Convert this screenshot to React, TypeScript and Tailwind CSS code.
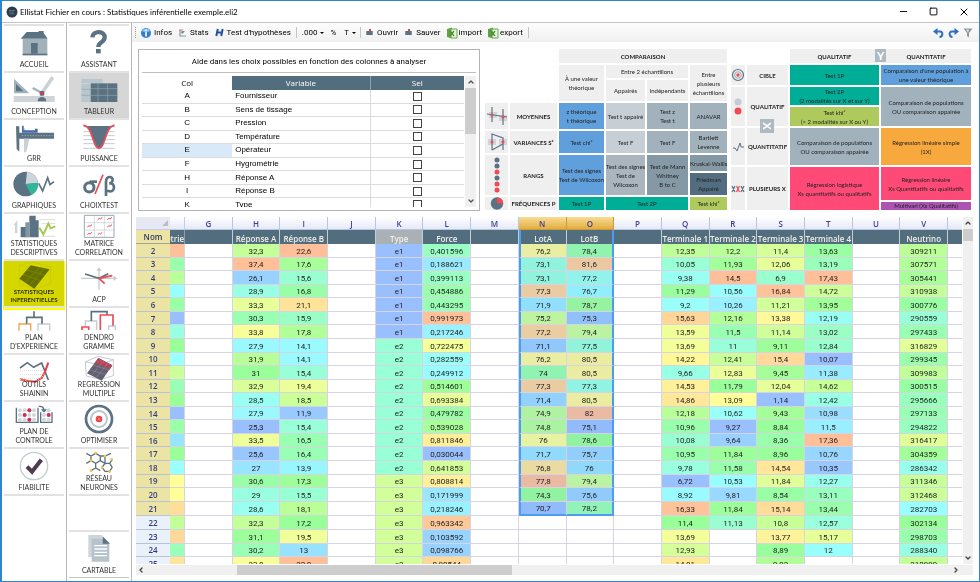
import { useState } from "react";
import type { ReactNode } from "react";
import { ChevronDown, ChevronLeft, ChevronRight, ChevronUp, Minus, Square, X } from "lucide-react";
import clsx from "clsx";

const SLATE = "#5b7282";
const LIGHT = "#c3ccd2";
const RED = "#ee4b55";

interface NavEntry {
    id: string;
    label: string[];
    icon: ReactNode;
}

// Sidebar icons share a 132 wide canvas, drawn at one third of its size
const Icon = ({ children, short }: { children: ReactNode; short?: boolean }) => (
    <svg
        viewBox={short ? "0 0 132 66" : "0 0 132 78"}
        className={clsx("w-11 shrink-0 overflow-visible", short ? "h-[22px]" : "h-[26px]")}
        fill="none"
        aria-hidden="true"
    >
        {children}
    </svg>
);

const leftNav: NavEntry[] = [
    {
        id: "accueil",
        label: ["ACCUEIL"],
        icon: (
            <Icon>
                <path d="M32 30h74v50H32z" fill="#a3b1bb" />
                <path d="M26 29 44 9h36V6h15v6l12 17z" fill={SLATE} />
                <path d="M57 42h20v32H57z" fill={SLATE} />
                <path d="M32 74h74v4H32z" fill={SLATE} />
            </Icon>
        ),
    },
    {
        id: "conception",
        label: ["CONCEPTION"],
        icon: (
            <Icon>
                <path d="M6 8v44h46z" fill="#a3b1bb" />
                <path d="M12 24v22h22z" fill={SLATE} />
                <path d="M5 60h123v18H5z" fill="#cfd4d8" />
                <path d="M77 76a12 12 0 0 1 26 0z" fill={SLATE} />
                <path d="m62 36 28 15" stroke="#a3b1bb" strokeWidth="7" />
                <path d="m92 48 30-44" stroke="#c9d0d6" strokeWidth="11" />
                <rect x="83" y="45" width="14" height="14" rx="3" fill={SLATE} />
                <circle cx="91" cy="52" r="5" fill="#e8304f" />
            </Icon>
        ),
    },
    {
        id: "grr",
        label: ["GRR"],
        icon: (
            <Icon>
                <path d="M16 29h110v18H16z" fill={SLATE} />
                <path d="M12 10h10v76l-8-8z" fill={SLATE} />
                <path d="M36 47h16l-8 38-8 4zM34 12l6 6v11h-6z" fill="#c9d0d6" />
                <path d="M30 8h5v14h34v-5h8v12H30z" fill="#466cad" />
                <path d="M30 38h92" stroke="#9aa9b4" strokeWidth="3" strokeDasharray="4 4" />
            </Icon>
        ),
    },
    {
        id: "graphiques",
        label: ["GRAPHIQUES"],
        icon: (
            <Icon>
                <circle cx="41" cy="42" r="37" fill={SLATE} />
                <path d="M41 42 45 5a37 37 0 0 1 33 34z" fill="#cdd5da" />
                <path d="m41 42 37-3a37 37 0 0 1-20 36z" fill="#2fb79b" />
                <path d="m80 40 12 23 15-40 7 21 12-9" stroke={SLATE} strokeWidth="5" />
            </Icon>
        ),
    },
    {
        id: "stat-desc",
        label: ["STATISTIQUES", "DESCRIPTIVES"],
        icon: (
            <Icon short>
                <path d="M4 25 16 10v38H9V25z" fill="#cdd5da" />
                <path d="M26 30h16v31H26zM52-4h19v65H52zM71 10h9v51h-9z" fill={SLATE} />
                <path d="M40 16h12v45H40z" fill="#8195a2" />
                <path d="M82 8h48M88 20h42M88 58h42" stroke={LIGHT} strokeWidth="2" />
                <path d="m82 32 12 20 15-32 7 14 14-6" stroke="#a7ca4d" strokeWidth="6" />
            </Icon>
        ),
    },
    {
        id: "stat-inf",
        label: ["STATISTIQUES", "INFERENTIELLES"],
        icon: (
            <Icon short>
                <path d="M22 4 64-5l52 12v52L68 76 22 60zM22 4l46 8 48-5M68 12v64" stroke={LIGHT} strokeWidth="2" />
                <path d="M22 44 56 4l57 12-46 58z" fill="#66707a" />
                <path d="m33 31 52 19M45 18l54 16M40 54l44-44M54 62l43-49" stroke="#8d969c" strokeWidth="1.5" />
            </Icon>
        ),
    },
    {
        id: "plan",
        label: ["PLAN", "D'EXPERIENCE"],
        icon: (
            <Icon short>
                <path d="M21 59V39h35v20" stroke="#f0a348" strokeWidth="4" />
                <path d="M78 59V39h35v20" stroke={LIGHT} strokeWidth="4" />
                <path d="M66 1v18M44 38V19h46v19" stroke={SLATE} strokeWidth="5" />
            </Icon>
        ),
    },
    {
        id: "outils",
        label: ["OUTILS", "SHAININ"],
        icon: (
            <Icon short>
                <path d="M24 38h84M24 50h84M24 61h84" stroke={LIGHT} strokeWidth="2" strokeDasharray="3 3" />
                <path d="m24 30 22-16 19 14 24-13 20 51" stroke={SLATE} strokeWidth="5" />
                <path d="m24 64 24 5 22 2 19-11 10-19 10-27" stroke="#e8384c" strokeWidth="6" />
                <path d="m24 64 24 5 22 2 19-11 10-19" stroke="#f6c34a" strokeWidth="3" strokeDasharray="4 4" />
            </Icon>
        ),
    },
    {
        id: "controle",
        label: ["PLAN DE", "CONTROLE"],
        icon: (
            <Icon short>
                <path d="M13 8v44h65V8M86 22v30h34V22" stroke={SLATE} strokeWidth="4" />
                {[16, 30, 44].map((y) =>
                    [24, 38, 52, 66, 96, 110].map((x) => (
                        <circle key={`${x}-${y}`} cx={x} cy={y} r="6" fill="#d3d7da" />
                    ))
                )}
                <circle cx="52" cy="16" r="6" fill="#cf2c59" />
                <circle cx="38" cy="30" r="6" fill="#cf2c59" />
                <circle cx="52" cy="44" r="6" fill="#cf2c59" />
                <circle cx="110" cy="30" r="6" fill="#cf2c59" />
                <path d="M80 4c12-1 16 4 16 14m-7-5 7 7 7-7" stroke={SLATE} strokeWidth="4" />
            </Icon>
        ),
    },
    {
        id: "fiabilite",
        label: ["FIABILITE"],
        icon: (
            <Icon>
                <circle cx="66" cy="42" r="41" stroke={LIGHT} strokeWidth="4" />
                <path d="m45 44 15 15 28-36" stroke="#4d3a53" strokeWidth="12" />
            </Icon>
        ),
    },
];

const rightNav: NavEntry[] = [
    {
        id: "assistant",
        label: ["ASSISTANT"],
        icon: (
            <Icon>
                <path d="M46 25c2-22 39-20 37 1-1 15-19 13-19 28" stroke={SLATE} strokeWidth="13" />
                <path d="M57 60h14v13H57z" fill={SLATE} />
            </Icon>
        ),
    },
    {
        id: "tableur",
        label: ["TABLEUR"],
        icon: (
            <Icon>
                <path d="M13 9h64v13H13zM13 24h28v54H13z" fill="#b9c6ce" />
                <path d="M41 22h80v56H41z" fill={SLATE} />
                <path d="M13 40h28M13 58h28M41 38h80M41 58h80M63 22v56M92 22v56" stroke="#93a5b0" strokeWidth="2" />
            </Icon>
        ),
    },
    {
        id: "puissance",
        label: ["PUISSANCE"],
        icon: (
            <Icon>
                <path d="M19 11h94M19 26h94M19 38h94M19 50h94M19 62h94M19 76h94" stroke={LIGHT} strokeWidth="3" />
                <path d="M22 9h88C88 12 84 76 66 76S44 12 22 9z" fill={SLATE} />
                <path d="M19 7c28 0 28 69 47 69S85 7 113 7" stroke={RED} strokeWidth="5" />
            </Icon>
        ),
    },
    {
        id: "choixtest",
        label: ["CHOIXTEST"],
        icon: (
            <Icon>
                <circle cx="37" cy="52" r="14" stroke={SLATE} strokeWidth="9" />
                <path d="M38 35h22" stroke={SLATE} strokeWidth="8" />
                <path d="M78 14 54 72" stroke={RED} strokeWidth="5" />
                <path
                    d="M87 78V36c0-20 21-18 20-6 0 10-10 10-10 10 18-3 18 24 3 24-6 0-13-3-13-3"
                    stroke={SLATE}
                    strokeWidth="8"
                />
            </Icon>
        ),
    },
    {
        id: "matrice",
        label: ["MATRICE", "CORRELATION"],
        icon: (
            <Icon short>
                <path d="M22-5h89v66H22z" fill="#fff" stroke="#9aa9b4" strokeWidth="3" />
                <path d="M52-5v66M82-5v66M22 17h89M22 39h89" stroke={LIGHT} strokeWidth="2" />
                <path
                    d="m62 8 5-4 3 2 6-5M91 8l5-4 3 2 6-5M31 30l5-4 3 2 6-5M91 30l5-4 3 2 6-5M31 53l5-4 3 2 6-5M62 53l5-4 3 2 6-5"
                    stroke={RED}
                    strokeWidth="3"
                />
            </Icon>
        ),
    },
    {
        id: "acp",
        label: ["ACP"],
        icon: (
            <Icon>
                <path d="M12 43h106M66 78V12" stroke={LIGHT} strokeWidth="4" />
                <path d="m110 35 10 8-10 8M58 20l8-10 8 10" fill={LIGHT} />
                <path d="m24 30 42 13 28-14" stroke={SLATE} strokeWidth="5" />
                <path d="m66 43 40-8M66 43l17 16" stroke={RED} strokeWidth="5" />
            </Icon>
        ),
    },
    {
        id: "dendro",
        label: ["DENDRO", "GRAMME"],
        icon: (
            <Icon short>
                <path d="M25 48V30h34v26M25 30h34" stroke={LIGHT} strokeWidth="4" />
                <path d="M95 57V45h20v12" stroke={LIGHT} strokeWidth="4" />
                <path d="M43 30V2h47v10" stroke={SLATE} strokeWidth="5" />
                <path d="M70 57V12h38v32M15 57v-9h20v9" stroke={RED} strokeWidth="5" />
            </Icon>
        ),
    },
    {
        id: "regression",
        label: ["REGRESSION", "MULTIPLE"],
        icon: (
            <Icon short>
                <path d="M25 12 62-5l47 10v48L72 64 28 54zM25 12l48 8 36-15M73 20v44" stroke={LIGHT} strokeWidth="3" />
                <path d="m30 46 34-46 42 22-32 46z" fill="#625f70" />
                <path d="M52 16 64 0l42 22-8 13z" fill="#a7495f" />
                <path d="m60 12 12-4 14 10 10 6" stroke="#f0454f" strokeWidth="5" strokeDasharray="5 5" />
                <path d="m40 36 48 14M50 22l48 14M44 52l34-42M58 58l34-42" stroke="#98929e" strokeWidth="1.5" />
            </Icon>
        ),
    },
    {
        id: "optimiser",
        label: ["OPTIMISER"],
        icon: (
            <Icon>
                <circle cx="66" cy="42" r="39" stroke={SLATE} strokeWidth="8" />
                <circle cx="66" cy="42" r="24" stroke="#bcc6cd" strokeWidth="6" />
                <circle cx="66" cy="42" r="10" fill="#ee4455" />
                <circle cx="66" cy="42" r="3" fill="#f6a43c" />
            </Icon>
        ),
    },
    {
        id: "reseau",
        label: ["RÉSEAU", "NEURONES"],
        icon: (
            <Icon short>
                <path
                    d="M28 4l14 8 14-8 14 8 14 0 18-8M42 12v14l14 8 14-8V12M28 34l14-8M70 26l14 8V12M84 34h14l8-12M56 34v14M84 34l-9 12 9 12h13l9-12M42 56l14-8 14 8M98 34l8 12"
                    stroke={SLATE}
                    strokeWidth="4"
                />
                {[[56, 3], [42, 26], [84, 12], [104, 22], [75, 47], [42, 56], [98, 59]].map(([x, y]) => (
                    <circle key={`${x}-${y}`} cx={x} cy={y} r="4" fill="#efc63c" />
                ))}
            </Icon>
        ),
    },
];

const cartable: NavEntry = {
    id: "cartable",
    label: ["CARTABLE"],
    icon: (
        <Icon>
            <path d="M34 0h42v66H34z" fill="#cdd5da" />
            <path d="M44 11h37l16 16v53H44z" fill="#b7c3cb" />
            <path d="M77 4v22h22z" fill={SLATE} />
            <path d="M52 32h38M52 42h38M52 52h38M52 62h38" stroke="#fff" strokeWidth="4" />
        </Icon>
    ),
};

const NavButton = ({ entry, active, onClick }: { entry: NavEntry; active: boolean; onClick: () => void }) => {
    const marked = entry.id === "stat-inf";

    return (
        <button
            onClick={onClick}
            className={clsx(
                "relative flex h-[47px] w-full shrink-0 flex-col items-center border-t-2 border-[#e2e2e2] pt-[3px] pb-[2px] font-[Lato,sans-serif] text-[#333]",
                marked ? "text-[6px] leading-[8px] font-bold" : "text-[7px] leading-[9px]",
                (active || marked) && "bg-[#d6d6d6]"
            )}
        >
            {entry.icon}
            <span className="mt-auto">
                {entry.label.map((line) => (
                    <span key={line} className="block whitespace-nowrap">
                        {line}
                    </span>
                ))}
            </span>
            {/* Marker pen over the current method */}
            {marked && <span className="absolute -inset-x-[1px] top-0 -bottom-[4px] bg-[#ffff00] mix-blend-multiply" />}
        </button>
    );
};

const Sidebar = () => {
    const [current, setCurrent] = useState("tableur");

    return (
        <nav className="flex shrink-0 border-t border-[#c4c4c4] bg-white">
            {[leftNav, rightNav].map((entries, i) => (
                <div
                    key={i}
                    className="flex w-[65px] flex-col border-r border-[#b8b8b8] px-[2px] pt-[1px] pb-[3px]"
                >
                    {entries.map((entry) => (
                        <NavButton
                            key={entry.id}
                            entry={entry}
                            active={current === entry.id}
                            onClick={() => setCurrent(entry.id)}
                        />
                    ))}
                    <div className="border-t-2 border-[#e2e2e2]" />
                    {i === 1 && (
                        <div className="mt-auto border-b border-[#c4c4c4]">
                            <NavButton
                                entry={cartable}
                                active={current === "cartable"}
                                onClick={() => setCurrent("cartable")}
                            />
                        </div>
                    )}
                </div>
            ))}
        </nav>
    );
};

const TitleBar = () => (
    <header className="flex h-[21px] shrink-0 items-center bg-white pr-[9px] pl-[4px]">
        <svg viewBox="0 0 12 12" className="h-3 w-3" aria-hidden="true">
            <circle cx="6" cy="6" r="5.500" fill="#2d3d4d" />
            <path d="M3 4.500h6M3 6h5M3.500 7.800h5" stroke="#5d7183" strokeWidth=".9" />
        </svg>
        <h1 className="ml-[2px] font-[Lato,sans-serif] text-[8px]">
            Ellistat Fichier en cours : Statistiques inférentielle exemple.eli2
        </h1>
        <div className="ml-auto flex items-center gap-5">
            <button aria-label="Réduire">
                <Minus size={11} strokeWidth={2} />
            </button>
            <button aria-label="Agrandir">
                <Square size={9} strokeWidth={2.500} />
            </button>
            <button aria-label="Fermer">
                <X size={12} strokeWidth={2} />
            </button>
        </div>
    </header>
);

const SheetIcon = () => (
    <svg viewBox="0 0 12 12" className="h-3 w-3" aria-hidden="true">
        <path d="M1 2 6 .5v11L1 10z" fill="#5fa143" />
        <path d="M5 2h6v9H5z" fill="#e9f3e2" stroke="#6aa84c" />
        <path d="m4 4 4 5M8 4 4 9" stroke="#4c8b31" strokeWidth="1.300" />
    </svg>
);

const FileIcon = () => (
    <svg viewBox="0 0 9 8" className="h-2 w-[9px]" aria-hidden="true">
        <path d="M1 2h7v4H1z" fill="#8296a3" />
        <path d="M2 2h5v4H2z" fill="#5b7282" />
        <path d="M4 0h2v3H4z" fill="#a9585f" />
    </svg>
);

const Toolbar = () => (
    <div className="flex h-[19px] shrink-0 items-center bg-gradient-to-b from-[#fdfdfd] to-[#f0f0f0] pr-[6px] pl-[3px] text-[8px]">
        <span className="mr-1 h-[11px] border-l border-dotted border-[#999]" />
        <button className="flex items-center gap-[2px]">
            <svg viewBox="0 0 12 12" className="h-3 w-3" aria-hidden="true">
                <circle cx="6" cy="6" r="5" fill="#2f7fd0" />
                <path d="M2 4a4.500 4.500 0 0 1 8 0c-2 1.500-6 1.500-8 0z" fill="#8fc2f0" />
                <path d="M6 5v4.500M6 2.500V4" stroke="#fff" strokeWidth="1.600" />
            </svg>
            Infos
        </button>
        <button className="ml-[6px] flex items-center gap-[3px]">
            <svg viewBox="0 0 9 8" className="h-2 w-[9px]" aria-hidden="true">
                <path d="M2 1v6h6" stroke="#8296a3" strokeWidth="1.200" fill="none" />
                <path d="M7 2 3 2.500 4 5z" fill="#5b7282" />
                <path d="M1 1h4" stroke="#e4736f" />
            </svg>
            Stats
        </button>
        <button className="ml-[6px] flex items-center gap-[3px]">
            <svg viewBox="0 0 9 9" className="h-[9px] w-[9px]" aria-hidden="true">
                <path d="M2.800 1 1.300 8M7.700 1 6.200 8M2 4.500h5" stroke="#24519b" strokeWidth="2" />
            </svg>
            Test d'hypothèses
        </button>
        <span className="mx-[5px] h-[11px] border-l border-[#c4c4c4]" />
        <button className="flex items-center gap-[3px]">
            .000 <span className="border-x-2 border-t-2 border-x-transparent border-t-black" />
        </button>
        <button className="ml-[6px]">%</button>
        <button className="ml-2 flex items-center gap-[3px]">
            T <span className="border-x-2 border-t-2 border-x-transparent border-t-black" />
        </button>
        <span className="mx-[4px] h-[11px] border-l border-[#c4c4c4]" />
        <button className="flex items-center gap-[3px]">
            <FileIcon /> Ouvrir
        </button>
        <button className="ml-[6px] flex items-center gap-[3px]">
            <FileIcon /> Sauver
        </button>
        <button className="ml-[5px] flex items-center gap-[1px]">
            <SheetIcon /> import
        </button>
        <button className="ml-[5px] flex items-center gap-[1px]">
            <SheetIcon /> export
        </button>
        <span className="mx-[5px] h-[11px] border-l border-[#c4c4c4]" />
        <div className="ml-auto flex items-center gap-1">
            <button aria-label="Annuler">
                <svg viewBox="0 0 11 10" className="h-[10px] w-[11px]" fill="none">
                    <path d="M2 3.500h5c3.500 0 3 5-.5 5.500" stroke="#2d6fc4" strokeWidth="2" />
                    <path d="M0 3.500 4.500 0v7z" fill="#2d6fc4" />
                </svg>
            </button>
            <button aria-label="Rétablir">
                <svg viewBox="0 0 11 10" className="h-[10px] w-[11px]" fill="none">
                    <path d="M9 3.500H4C.5 3.500 1 8.500 4.500 9" stroke="#2d6fc4" strokeWidth="2" />
                    <path d="M11 3.500 6.500 0v7z" fill="#2d6fc4" />
                </svg>
            </button>
            <button aria-label="Filtrer">
                <svg viewBox="0 0 10 10" className="h-[10px] w-[10px]">
                    <path d="M.5.500h9L6 5v4.500L4 8V5z" fill="#8b979c" />
                    <path d="M3 1.500h3L5 5z" fill="#d8dee0" />
                </svg>
            </button>
        </div>
    </div>
);

const variables = [
    ["A", "Fournisseur"],
    ["B", "Sens de tissage"],
    ["C", "Pression"],
    ["D", "Température"],
    ["E", "Opérateur"],
    ["F", "Hygrométrie"],
    ["H", "Réponse A"],
    ["I", "Réponse B"],
    ["K", "Type"],
];

const VariablePanel = () => {
    const [selected, setSelected] = useState<string[]>([]);

    const toggle = (col: string) =>
        setSelected((prev) => (prev.includes(col) ? prev.filter((c) => c !== col) : [...prev, col]));

    return (
        <section className="mr-[1px] flex min-w-0 flex-1 flex-col border border-[#b4b4b4] bg-white px-[3px] pt-[1px] pb-[3px]">
            <h2 className="h-[22px] border-b border-[#c0c0c0] text-center text-[8px] leading-[21px]">
                Aide dans les choix possibles en fonction des colonnes à analyser
            </h2>
            <div className="mt-[3px] flex min-h-0 flex-1 gap-[1px]">
                <div className="min-w-0 flex-1 overflow-hidden">
                    <table className="h-[calc(100%+5px)] w-full table-fixed border-separate border-spacing-0 font-['Liberation_Sans',sans-serif] text-[8px] leading-[12px]">
                        <thead className="font-['Open_Sans',sans-serif]">
                            <tr className="h-[14px]">
                                <th className="w-[28%] font-normal">Col</th>
                                <th className="w-[43%] border-r border-[#8ea0ab] bg-[#526d7e] font-normal text-white">
                                    Variable
                                </th>
                                <th className="bg-[#526d7e] font-normal text-white">Sel</th>
                            </tr>
                        </thead>
                        <tbody>
                            {variables.map(([col, name]) => (
                                <tr key={col}>
                                    <td
                                        className={clsx(
                                            "border-b border-[#dcdcdc] p-0 text-center",
                                            col === "E" && "bg-[#d9e9f8]"
                                        )}
                                    >
                                        {col}
                                    </td>
                                    <td className="border-r border-b border-[#dcdcdc] p-0 pl-[3px]">
                                        <label htmlFor={`sel-${col}`}>{name}</label>
                                    </td>
                                    <td className="border-b border-[#dcdcdc] p-0 text-center leading-[0]">
                                        <input
                                            id={`sel-${col}`}
                                            type="checkbox"
                                            checked={selected.includes(col)}
                                            onChange={() => toggle(col)}
                                            className="h-[9px] w-[9px] appearance-none border border-[#444] bg-white align-middle checked:bg-[#526d7e]"
                                        />
                                    </td>
                                </tr>
                            ))}
                        </tbody>
                    </table>
                </div>
                <div className="flex w-[11px] flex-col items-center bg-[#f0f0f0]">
                    <ChevronUp size={8} strokeWidth={4} className="my-[2px] text-[#555]" />
                    <div className="h-[46px] w-full bg-[#cdcdcd]" />
                    <ChevronDown size={8} strokeWidth={4} className="mt-auto mb-[2px] text-[#555]" />
                </div>
            </div>
        </section>
    );
};

const head = "bg-[#efefef] p-0 font-normal";
const rowHead = "bg-[#efefef] p-0 font-bold";

const ComparisonTable = () => (
    <table className="-m-[2px] w-[246px] shrink-0 table-fixed border-separate border-spacing-[2px] text-center font-[Lato,sans-serif] text-[6px] leading-[9px] whitespace-nowrap text-[#222]">
        <colgroup>
            <col className="w-[23px]" />
            <col className="w-[47px]" />
            <col className="w-[45px]" />
            <col className="w-[39px]" />
            <col className="w-[41px]" />
            <col />
        </colgroup>
        <tbody>
            <tr className="h-[14px]">
                <td colSpan={2} rowSpan={3} />
                <th colSpan={4} className={rowHead}>
                    COMPARAISON
                </th>
            </tr>
            <tr className="h-[13px]">
                <th rowSpan={2} className={head}>
                    À une valeur
                    <br />
                    théorique
                </th>
                <th colSpan={2} className={head}>
                    Entre 2 échantillons
                </th>
                <th rowSpan={2} className={head}>
                    Entre
                    <br />
                    plusieurs
                    <br />
                    échantillons
                </th>
            </tr>
            <tr className="h-[21px]">
                <th className={head}>Appairés</th>
                <th className={head}>Indépendants</th>
            </tr>
            <tr className="h-[26px]">
                <td className="bg-[#efefef] p-0">
                    <svg viewBox="0 0 22 20" className="mx-auto h-5 w-[22px]" aria-hidden="true">
                        <path d="M3 6h8v6H3zM13 9h8v6h-8z" fill="#cfd6da" />
                        <path d="M6 1v15M17 3v16M1 8l20 3" stroke="#5b7282" strokeWidth="1.200" />
                        <circle cx="6" cy="9" r="1.500" fill={RED} />
                        <circle cx="17" cy="11" r="1.500" fill={RED} />
                    </svg>
                </td>
                <th className={rowHead}>MOYENNES</th>
                <td className="bg-[#5f9fdc] p-0">
                    z théorique
                    <br />t théorique
                </td>
                <td className="bg-[#c6cfd5] p-0">Test t appairé</td>
                <td className="bg-[#a2b2bd] p-0">
                    Test z
                    <br />
                    Test t
                </td>
                <td className="bg-[#a2b2bd] p-0">ANAVAR</td>
            </tr>
            <tr className="h-[22px]">
                <td className="bg-[#efefef] p-0">
                    <svg viewBox="0 0 22 20" className="mx-auto h-5 w-[22px]" fill="none" aria-hidden="true">
                        <path d="M2 7h8v6H2zM13 7h8v6h-8z" fill="#cfd6da" />
                        <path d="M6 18V2l11 4v10M6 18l11-6M17 6v12" stroke="#5b7282" strokeWidth="1.200" />
                        <circle cx="6" cy="10" r="1.500" fill={RED} />
                        <circle cx="17" cy="10" r="1.500" fill={RED} />
                    </svg>
                </td>
                <th className={rowHead}>VARIANCES S²</th>
                <td className="bg-[#5f9fdc] p-0">Test chi²</td>
                <td className="bg-[#c6cfd5] p-0">Test F</td>
                <td className="bg-[#a2b2bd] p-0">Test F</td>
                <td className="bg-[#a2b2bd] p-0">
                    Bartlett
                    <br />
                    Levenne
                </td>
            </tr>
            <tr className="h-4">
                <td rowSpan={2} className="bg-[#efefef] p-0">
                    <svg viewBox="0 0 6 36" className="mx-auto h-9 w-[6px]" aria-hidden="true">
                        {[SLATE, SLATE, RED, SLATE, RED, RED].map((fill, i) => (
                            <circle key={i} cx="3" cy={3 + i * 6} r="2.500" fill={fill} />
                        ))}
                    </svg>
                </td>
                <th rowSpan={2} className={rowHead}>
                    RANGS
                </th>
                <td rowSpan={2} className="bg-[#5f9fdc] p-0">
                    Test des signes
                    <br />
                    Test de Wilcoxon
                </td>
                <td rowSpan={2} className="bg-[#aab5bd] p-0">
                    Test des signes
                    <br />
                    Test de
                    <br />
                    Wilcoxon
                </td>
                <td rowSpan={2} className="bg-[#8498a5] p-0">
                    Test de Mann
                    <br />
                    Whitney
                    <br />B to C
                </td>
                <td className="bg-[#8498a5] p-0">Kruskal-Wallis</td>
            </tr>
            <tr className="h-[22px]">
                <td className="bg-[#526d80] p-0">
                    Friedman
                    <br />
                    Appairé
                </td>
            </tr>
            <tr className="h-[13px]">
                <td className="bg-[#efefef] p-0">
                    <svg viewBox="0 0 14 13" className="mx-auto h-[13px] w-[14px]" aria-hidden="true">
                        <circle cx="7" cy="6.500" r="6.200" fill={SLATE} />
                        <path d="M7 6.500V.300a6.200 6.200 0 0 1 6.200 6.200z" fill={RED} />
                    </svg>
                </td>
                <th className={rowHead}>FRÉQUENCES P</th>
                <td className="bg-[#00ae98] p-0">Test 1P</td>
                <td colSpan={2} className="bg-[#00ae98] p-0">
                    Test 2P
                </td>
                <td className="bg-[#afca5c] p-0">Test khi²</td>
            </tr>
        </tbody>
    </table>
);

const RegressionTable = () => (
    <div className="relative -m-[2px] w-[244px] shrink-0">
        <table className="w-full table-fixed border-separate border-spacing-[2px] text-center font-[Lato,sans-serif] text-[6px] leading-[9px] text-[#222]">
            <colgroup>
                <col className="w-[14px]" />
                <col className="w-[41px]" />
                <col className="w-[89px]" />
                <col />
            </colgroup>
            <tbody>
                <tr className="h-[14px]">
                    <td colSpan={2} />
                    <th className={rowHead}>QUALITATIF</th>
                    <th className={rowHead}>QUANTITATIF</th>
                </tr>
                <tr className="h-5">
                    <td className="bg-[#efefef] p-0">
                        <svg viewBox="0 0 14 14" className="h-[14px] w-[14px]" fill="none" aria-hidden="true">
                            <circle cx="7" cy="7" r="5.500" stroke={SLATE} strokeWidth="1.200" />
                            <circle cx="7" cy="7" r="3.300" stroke="#9aa9b4" />
                            <circle cx="7" cy="7" r="1.700" fill={RED} />
                        </svg>
                    </td>
                    <th className={rowHead}>CIBLE</th>
                    <td className="bg-[#00ae98] p-0">Test 1P</td>
                    <td className="bg-[#5f9fdc] p-0">
                        Comparaison d'une population à
                        <br />
                        une valeur théorique
                    </td>
                </tr>
                <tr className="h-[18px]">
                    <td rowSpan={2} className="bg-[#efefef] p-0">
                        <svg viewBox="0 0 14 18" className="h-[18px] w-[14px]" aria-hidden="true">
                            <circle cx="7" cy="4" r="3.500" fill={LIGHT} />
                            <circle cx="7" cy="13" r="3.500" fill={RED} />
                        </svg>
                    </td>
                    <th rowSpan={2} className={rowHead}>
                        QUALITATIF
                    </th>
                    <td className="bg-[#00ae98] p-0">
                        Test 2P
                        <br />
                        (2 modalités sur X et sur Y)
                    </td>
                    <td rowSpan={2} className="bg-[#a2b2bd] p-0">
                        Comparaison de populations
                        <br />
                        OU comparaison appairée
                    </td>
                </tr>
                <tr className="h-[19px]">
                    <td className="bg-[#afca5c] p-0">
                        Test khi²
                        <br />
                        (&gt; 2 modalités sur X ou Y)
                    </td>
                </tr>
                <tr className="h-[37px]">
                    <td className="bg-[#efefef] p-0">
                        <svg viewBox="0 0 14 10" className="h-[10px] w-[14px]" fill="none" aria-hidden="true">
                            <path d="M2 6h2l2 3 3-8 1 4h3" stroke={SLATE} />
                        </svg>
                    </td>
                    <th className={rowHead}>QUANTITATIF</th>
                    <td className="bg-[#a2b2bd] p-0">
                        Comparaison de populations
                        <br />
                        OU comparaison appairée
                    </td>
                    <td className="bg-[#f8a93e] p-0">
                        Régression linéaire simple
                        <br />
                        (1X)
                    </td>
                </tr>
                <tr className="h-[33px]">
                    <td rowSpan={2} className="bg-[#efefef] p-0">
                        <svg viewBox="0 0 14 8" className="h-2 w-[14px]" fill="none" aria-hidden="true">
                            <path d="m1 1 3 6m0-6L1 7M10 1l3 6m0-6-3 6" stroke={SLATE} strokeWidth="1.200" />
                            <path d="m5.500 1 3 6m0-6-3 6" stroke={RED} strokeWidth="1.200" />
                        </svg>
                    </td>
                    <th rowSpan={2} className={rowHead}>
                        PLUSIEURS X
                    </th>
                    <td rowSpan={2} className="bg-[#ff4a78] p-0">
                        Régression logistique
                        <br />
                        Xs quantitatifs ou qualitatifs
                    </td>
                    <td className="bg-[#ff4a78] p-0">
                        Régression linéaire
                        <br />
                        Xs Quantitatifs ou qualitatifs
                    </td>
                </tr>
                <tr className="h-2">
                    <td className="bg-[#ab54b4] p-0 leading-[8px]">Multivari (Xs Qualitatifs)</td>
                </tr>
            </tbody>
        </table>
        {/* Axis badges straddle the header cells */}
        <span className="absolute top-[2px] left-[146px] h-[13px] w-[11px] bg-[#aebac1] text-center font-[Lato,sans-serif] text-[11px] leading-[13px] font-black text-white">
            Y
        </span>
        <span className="absolute top-[72px] left-[31px] h-[14px] w-[14px] rotate-90 bg-[#aebac1] text-center font-[Lato,sans-serif] text-[11px] leading-[14px] font-black text-white">
            X
        </span>
    </div>
);

// Heat scale: blue, cyan, green, yellow, orange
const stops = [
    [153, 191, 255],
    [153, 255, 255],
    [153, 255, 153],
    [255, 255, 153],
    [255, 191, 153],
];
const selectionTint = [90, 160, 225];

const heat = (t: number, tinted = false) => {
    const pos = Math.min(Math.max(t, 0), 1) * 4;
    const i = Math.min(Math.floor(pos), 3);
    const rgb = stops[i].map((c, k) => {
        const v = c + (stops[i + 1][k] - c) * (pos - i);
        return Math.round(tinted ? v * 0.87 + selectionTint[k] * 0.13 : v);
    });
    return `rgb(${rgb.join(",")})`;
};

interface Column {
    letter: string;
    name?: string;
    range?: [number, number, number];
    values?: string[];
}

const columns: Column[] = [
    { letter: "G" },
    {
        letter: "H",
        name: "Réponse A",
        range: [25.3, 31, 37],
        values: "32,3 37,4 26,1 28,9 33,3 30,3 33,8 27,9 31,9 31 32,9 28,5 27,9 25,3 33,5 25,6 27 30,6 29 28,6 32,3 31,1 30,2 33,8".split(" "),
    },
    {
        letter: "I",
        name: "Réponse B",
        range: [11.4, 17.2, 22.6],
        values: "22,6 17,6 15,6 16,8 21,1 15,9 17,8 14,1 14,1 15,4 19,4 18,5 11,9 15,4 16,5 16,4 13,9 17,3 15,5 18,1 17,2 19,5 13 22,8".split(" "),
    },
    { letter: "J" },
    {
        letter: "K",
        name: "Type",
        range: [1, 2.43, 4.47],
        values: "e1 e1 e1 e1 e1 e1 e1 e2 e2 e2 e2 e2 e2 e2 e2 e2 e2 e3 e3 e3 e3 e3 e3 e3".split(" "),
    },
    {
        letter: "L",
        name: "Force",
        range: [0.03, 0.5, 1],
        values: "0,401596 0,188621 0,399113 0,454886 0,443295 0,991973 0,217246 0,722475 0,282559 0,249912 0,514601 0,693384 0,479782 0,539028 0,811846 0,030044 0,641853 0,808814 0,171999 0,218246 0,963342 0,103592 0,098766 0,90544".split(" "),
    },
    { letter: "M" },
    {
        letter: "N",
        name: "LotA",
        range: [70.7, 74.3, 77.8],
        values: "76,2 73,1 73,1 77,3 71,9 75,2 77,2 71,1 76,2 74 77,3 71,4 74,9 74,8 76 71,7 76,8 77,8 74,3 70,7".split(" "),
    },
    {
        letter: "O",
        name: "LotB",
        range: [75.1, 78.6, 82],
        values: "78,4 81,6 77,2 76,7 78,7 75,3 79,4 77,5 80,5 80,5 77,3 80,5 82 75,1 78,6 75,7 76 79,4 75,6 78,2".split(" "),
    },
    { letter: "P" },
    {
        letter: "Q",
        name: "Terminale 1",
        range: [6.7, 11.4, 16.5],
        values: "12,35 10,05 9,38 11,29 9,2 15,63 13,59 13,69 14,22 9,66 14,53 14,86 12,18 10,96 10,08 10,95 9,78 6,72 8,92 16,33 11,4 13,69 12,93 14,81".split(" "),
    },
    {
        letter: "R",
        name: "Terminale 2",
        range: [9.3, 11.8, 14.4],
        values: "12,2 11,93 14,5 10,56 10,26 12,16 11,5 11 12,41 12,83 11,79 13,09 10,62 9,27 9,64 11,84 11,58 10,53 9,81 11,84 11,13".split(" "),
    },
    {
        letter: "S",
        name: "Terminale 3",
        range: [1.1, 9, 17],
        values: "11,4 12,06 6,9 16,84 11,21 13,38 11,14 9,11 15,4 9,45 12,04 1,14 9,43 8,84 8,36 8,96 14,54 11,84 8,54 15,14 10,8 13,77 8,89 9,93".split(" "),
    },
    {
        letter: "T",
        name: "Terminale 4",
        range: [10.1, 13.8, 17.4],
        values: "13,63 13,19 17,43 14,72 13,95 12,19 13,02 12,84 10,07 11,38 14,62 12,42 10,98 11,5 17,36 10,76 10,35 12,27 13,11 13,44 12,57 15,17 12".split(" "),
    },
    { letter: "U" },
    {
        letter: "V",
        name: "Neutrino",
        range: [263000, 302500, 342000],
        values: "309211 307571 305441 310938 300776 290559 297433 316829 299345 309983 300515 295666 297133 294822 316417 304359 286342 311346 312468 282703 302134 298703 288340 310999".split(" "),
    },
];

// Column F is scrolled almost out of view, only its shading is visible
const hygrometry = [
    1, 0.45, 0.58, 0.25, 0.47, 0, 0.32, 0.5, 0.25, 0.62, 0.43, 0.5, 0, 0.46, 0.15, 0.5, 0.25, 0.75, 0.75, 0.88, 0.6,
    0.9, 0.42, 0.85,
];

const cellColor = (col: Column, value: string) => {
    if (!col.range) return undefined;
    const [lo, mid, hi] = col.range;
    const v = parseFloat(value.replace("e", "").replace(",", "."));
    const t = v < mid ? (0.5 * (v - lo)) / (mid - lo) : 0.5 + (0.5 * (v - mid)) / (hi - mid);
    return heat(t, col.letter === "N" || col.letter === "O");
};

const LAST_SELECTED = 19;

const selectionEdge = (letter: string, row: number) =>
    row <= LAST_SELECTED &&
    clsx(
        letter === "N" && "border-l-2 border-l-[#4a9df0]",
        letter === "O" && "border-r-2 border-r-[#4a9df0]",
        row === LAST_SELECTED && (letter === "N" || letter === "O") && "border-b-2 border-b-[#4a9df0]"
    );

const Spreadsheet = () => (
    <div className="flex min-h-0 flex-1 flex-col gap-[1px]">
        <div className="flex min-h-0 flex-1 gap-[1px]">
            <div className="min-w-0 flex-1 overflow-hidden">
                <table className="h-[calc(100%+7px)] w-full table-fixed border-separate border-spacing-0 text-center font-['Open_Sans',sans-serif] text-[8px] leading-[11px] text-[#222]">
                    <colgroup>
                        <col className="w-[34px]" />
                        <col className="w-[15px]" />
                        {columns.map((col) => (
                            <col key={col.letter} />
                        ))}
                        <col className="w-[14px]" />
                    </colgroup>
                    <thead>
                        <tr className="h-[13px] bg-gradient-to-b from-white to-[#e4e7f6] text-[#3b3f98]">
                            <th className="border-b border-[#c5cbe4] bg-[#e6e9f4] p-0">
                                <span className="mr-[2px] ml-auto block h-0 w-0 border-b-[6px] border-l-[6px] border-b-[#b9bfc9] border-l-transparent" />
                            </th>
                            <th className="border-r border-b border-[#c5cbe4] p-0" />
                            {columns.map((col) => (
                                <th
                                    key={col.letter}
                                    className={clsx(
                                        "border-r border-b border-[#b9c6e0] p-0 font-semibold",
                                        (col.letter === "N" || col.letter === "O") &&
                                            "border-[#c99b3a] bg-gradient-to-b from-[#f9dc92] to-[#e3ad3c]"
                                    )}
                                >
                                    {col.letter}
                                </th>
                            ))}
                            <th className="border-b border-[#c5cbe4] p-0" />
                        </tr>
                        <tr className="h-[14px] bg-[#526d7e] text-[#f0f0e6]">
                            <th className="border-b border-[#a8a88c] bg-[#ece4a4] p-0 align-middle font-semibold text-[#333d63]">
                                Nom
                            </th>
                            <th className="overflow-hidden border-r border-[#8ea0ab] p-0 align-bottom font-semibold">
                                <span className="flex justify-end">étrie</span>
                            </th>
                            {columns.map((col) => (
                                <th
                                    key={col.letter}
                                    className={clsx(
                                        "border-r border-[#c4ced5] p-0 align-bottom font-semibold whitespace-nowrap",
                                        col.letter === "K" && "bg-[#a9b1b6]",
                                        selectionEdge(col.letter, 0)
                                    )}
                                >
                                    {col.name}
                                </th>
                            ))}
                            <th className="p-0" />
                        </tr>
                    </thead>
                    <tbody>
                        {hygrometry.map((shade, row) => (
                            <tr key={row}>
                                <th
                                    className={clsx(
                                        "border-b border-[#b9c3d8] p-0 align-middle font-semibold text-[#333d80]",
                                        row <= LAST_SELECTED ? "bg-[#ece4a4]" : "bg-[#eaf1fb]"
                                    )}
                                >
                                    {row + 2}
                                </th>
                                <td
                                    className="border-r border-b border-[#d5d5e2] p-0"
                                    style={{ backgroundColor: heat(shade) }}
                                />
                                {columns.map((col) => {
                                    const value = col.values?.[row];
                                    return (
                                        <td
                                            key={col.letter}
                                            className={clsx(
                                                "border-r border-b border-[#d5d5e2] p-0 align-bottom font-[Roboto,sans-serif]",
                                                selectionEdge(col.letter, row)
                                            )}
                                            style={value ? { backgroundColor: cellColor(col, value) } : undefined}
                                        >
                                            {value}
                                        </td>
                                    );
                                })}
                                <td className="border-b border-[#d5d5e2] p-0" />
                            </tr>
                        ))}
                    </tbody>
                </table>
            </div>
            <div className="flex w-[10px] flex-col items-center bg-[#f0f0f0]">
                <ChevronUp size={8} strokeWidth={4} className="my-[2px] text-[#444]" />
                <div className="h-[12px] w-full bg-[#cdcdcd]" />
                <ChevronDown size={8} strokeWidth={4} className="mt-auto mb-[2px] text-[#444]" />
            </div>
        </div>
        <div className="flex h-[10px] shrink-0 items-center bg-[#f0f0f0] px-[1px]">
            <ChevronLeft size={8} strokeWidth={4} className="text-[#444]" />
            <div className="ml-[11%] h-full w-[33%] bg-[#cdcdcd]" />
            <ChevronRight size={8} strokeWidth={4} className="mr-3 ml-auto text-[#444]" />
        </div>
    </div>
);

export default function App() {
    return (
        <div className="flex h-screen flex-col overflow-hidden border border-l-2 border-[#2f86cf] bg-white font-['Roboto',sans-serif] text-black">
            <TitleBar />
            <div className="flex min-h-0 flex-1">
                <Sidebar />
                <main className="flex min-w-0 flex-1 flex-col border-t border-[#c4c4c4]">
                    <Toolbar />
                    <div className="mt-[7px] mr-[8px] ml-[6px] flex h-[162px] shrink-0 items-start gap-1">
                        <div className="flex h-full min-w-0 flex-1">
                            <VariablePanel />
                        </div>
                        <ComparisonTable />
                        <RegressionTable />
                    </div>
                    <div className="mt-[6px] mr-[6px] mb-[6px] ml-[4px] flex min-h-0 flex-1 flex-col">
                        <Spreadsheet />
                    </div>
                </main>
            </div>
        </div>
    );
}
